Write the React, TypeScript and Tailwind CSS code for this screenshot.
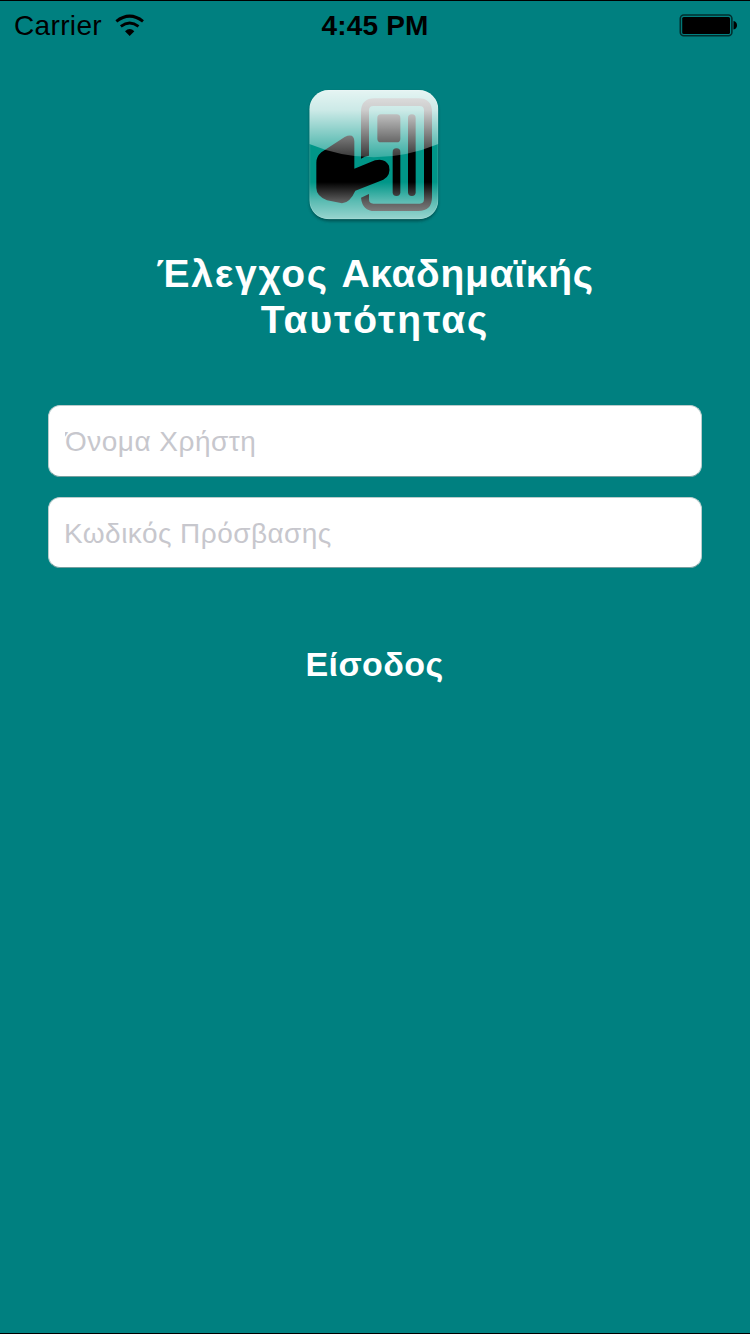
function WifiIcon() {
  return (
    <svg width="30" height="24" viewBox="0 0 90 72" fill="none" stroke="#000" className="mt-[13px] ml-[13px]">
      <path d="M4 22 Q44 -9 84 22" strokeWidth="9" />
      <path d="M17.5 37 Q44 17 70.5 37" strokeWidth="8.5" />
      <path d="M30 52 Q44 38 58 52 L44 66 Z" fill="#000" stroke="none" />
    </svg>
  );
}

function BatteryIcon() {
  return (
    <svg width="60" height="26" viewBox="0 0 60 26" className="mt-[12px] mr-[11px]">
      <rect x="1.3" y="2" width="51.6" height="20.8" rx="3.5" fill="none" stroke="#002e2e" strokeWidth="1.6" />
      <rect x="3.2" y="3.9" width="47.8" height="17" rx="1.5" fill="#000" />
      <path d="M54.5 8 C59.2 8.5 59.2 15.9 54.5 16.4 Z" fill="#000" />
    </svg>
  );
}

function AppLogo() {
  return (
    <svg width="160" height="150" viewBox="0 0 480 450" aria-hidden="true">
      <defs>
        <linearGradient id="gloss" x1="0" y1="30" x2="0" y2="232" gradientUnits="userSpaceOnUse">
          <stop offset="0" stopColor="#fff" stopOpacity="0.9" />
          <stop offset="0.3" stopColor="#fff" stopOpacity="0.8" />
          <stop offset="1" stopColor="#fff" stopOpacity="0.22" />
        </linearGradient>
        <linearGradient id="glow" x1="0" y1="306" x2="0" y2="418" gradientUnits="userSpaceOnUse">
          <stop offset="0" stopColor="#fff" stopOpacity="0" />
          <stop offset="0.5" stopColor="#fff" stopOpacity="0.35" />
          <stop offset="1" stopColor="#fff" stopOpacity="0.6" />
        </linearGradient>
        <clipPath id="tile">
          <rect x="43" y="30" width="387" height="388" rx="58" />
        </clipPath>
        <filter id="shade" x="-10%" y="-10%" width="120%" height="120%">
          <feGaussianBlur stdDeviation="4" />
        </filter>
        <filter id="soft" x="-5%" y="-5%" width="110%" height="110%">
          <feGaussianBlur stdDeviation="1.5" />
        </filter>
      </defs>
      <rect x="44" y="36" width="385" height="388" rx="58" fill="#003c3c" opacity="0.7" filter="url(#shade)" />
      <g clipPath="url(#tile)">
        <rect x="43" y="30" width="387" height="388" fill="#009688" />
        <g filter="url(#soft)">
          <path
            d="M198 236 V96 Q198 55 239 55 H370 Q411 55 411 96 V352 Q411 393 370 393 H239 Q202 393 198 353 L222 342 V358 Q222 371 235 371 H374 Q387 371 387 358 V91 Q387 78 374 78 H235 Q222 78 222 91 V227 Q208 229 198 236 Z"
            fill="#000"
          />
          <rect x="247" y="103" width="69" height="84" rx="11" fill="#000" />
          <rect x="339" y="103" width="23" height="245" rx="11" fill="#000" />
          <rect x="293" y="205" width="23" height="143" rx="11" fill="#000" />
          <path
            d="M64 248 Q64 230 79 217 L149 171 Q177 158 178 184 V266 L240 241 Q270 233 282 257 Q289 286 265 299 L181 332 Q165 368 141 370 L96 361 Q64 348 64 324 Z"
            fill="#000"
          />
        </g>
        <path d="M43 30 H430 V192 Q236 272 43 192 Z" fill="url(#gloss)" />
        <rect x="43" y="306" width="387" height="112" fill="url(#glow)" />
        <rect x="44" y="31" width="385" height="386" rx="57" fill="none" stroke="#fff" strokeOpacity="0.2" strokeWidth="3" />
      </g>
    </svg>
  );
}

const fieldClass =
  "block h-[71.5px] w-full rounded-[12px] border border-[#b9cccc] border-b-[#789f9f] bg-white pr-[15px] text-[28px] text-[#c7c7cd] outline-none placeholder:text-[#c7c7cd] placeholder:opacity-100";

export default function App() {
  return (
    <div className="flex h-[1334px] w-[750px] flex-col overflow-hidden border-t border-b border-black bg-[#008080] font-['Liberation_Sans',sans-serif]">
      <header className="grid h-[79px] shrink-0 grid-cols-[1fr_auto_1fr] text-black">
        <div className="flex items-start pl-[14px]">
          <span className="mt-[9px] text-[28px] leading-8 tracking-[0.35px]">Carrier</span>
          <WifiIcon />
        </div>
        <span className="mt-[9px] text-[28px] leading-8 font-bold tracking-[0.2px]">4:45 PM</span>
        <div className="flex items-start justify-end">
          <BatteryIcon />
        </div>
      </header>
      <main className="flex flex-col items-center">
        <AppLogo />
        <h1 className="mt-[21px] text-center text-[39px] leading-[46px] font-bold tracking-[0.7px] text-white">
          <span className="tracking-[1.75px]">Έλεγχος </span>Ακαδημαϊκής
          <br />
          <span className="tracking-[1.9px]">Ταυτότητας</span>
        </h1>
        <form className="mt-[62px] flex w-[654px] flex-col gap-[20px]" onSubmit={(e) => e.preventDefault()}>
          <input className={`${fieldClass} pt-[2px] pl-[16px] tracking-[0.5px]`} type="text" placeholder="Όνομα Χρήστη" />
          <input className={`${fieldClass} pt-[4px] pl-[15px] tracking-[0.45px]`} type="password" placeholder="Κωδικός Πρόσβασης" />
          <button type="submit" className="mt-[54px] mr-[1px] self-center text-[34px] leading-[44px] font-bold tracking-[0.4px] text-white">
            Είσοδος
          </button>
        </form>
      </main>
    </div>
  );
}
